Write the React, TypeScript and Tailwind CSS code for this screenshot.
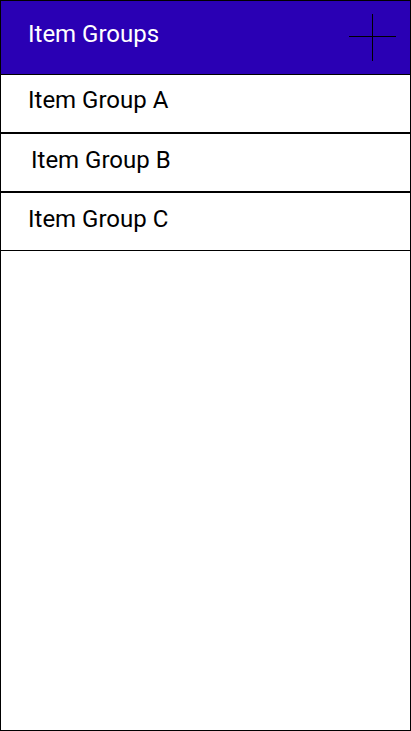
export default function App() {
  const font = { fontFamily: 'Roboto, "Noto Sans", sans-serif' };
  return (
    <div className="w-[411px] h-[731px] border border-black bg-white flex flex-col" style={font}>
      <div className="h-[74px] shrink-0 bg-[#2a00b4] border-b border-black relative">
        <div className="pl-[27px] pt-[19px] text-[24px] text-white leading-[28px]">Item Groups</div>
        <svg className="absolute left-[347px] top-[12px]" width="48" height="49" viewBox="0 0 48 49" shapeRendering="crispEdges">
          <line x1="24.5" y1="1" x2="24.5" y2="48" stroke="#000" strokeWidth="1" />
          <line x1="1" y1="23.5" x2="48" y2="23.5" stroke="#000" strokeWidth="1" />
        </svg>
      </div>
      <div className="h-[59px] shrink-0 border-b-2 border-black pl-[27px] pt-[11px] text-[24px] leading-[28px] text-black">Item Group A</div>
      <div className="h-[59px] shrink-0 border-b-2 border-black pl-[30px] pt-[12px] text-[24px] leading-[28px] text-black">Item Group B</div>
      <div className="h-[58px] shrink-0 border-b border-black pl-[27px] pt-[12px] text-[24px] leading-[28px] text-black">Item Group C</div>
    </div>
  );
}
